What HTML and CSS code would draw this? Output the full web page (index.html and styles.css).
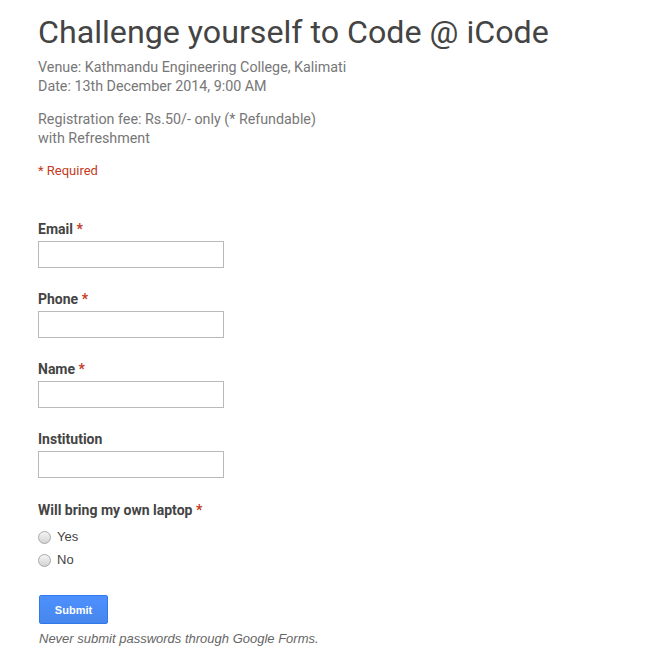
FILE: index.html
```html
<!DOCTYPE html>
<html>
<head>
<meta charset="utf-8">
<link rel="stylesheet" href="styles.css">
</head>
<body>
<div class="form">
  <h1 class="title">Challenge yourself to Code @ iCode</h1>
  <div class="desc">
    <p>Venue: Kathmandu Engineering College, Kalimati<br>Date: 13th December 2014, 9:00 AM</p>
    <p>Registration fee: Rs.50/- only (* Refundable)<br>with Refreshment</p>
  </div>
  <div class="req-note">* Required</div>
  <div class="items">
    <div class="item">
      <label class="label">Email <span class="star">*</span></label>
      <input class="text" type="text">
    </div>
    <div class="item">
      <label class="label">Phone <span class="star">*</span></label>
      <input class="text" type="text">
    </div>
    <div class="item">
      <label class="label">Name <span class="star">*</span></label>
      <input class="text" type="text">
    </div>
    <div class="item">
      <label class="label">Institution</label>
      <input class="text" type="text">
    </div>
    <div class="item item-choice">
      <label class="label">Will bring my own laptop <span class="star">*</span></label>
      <div class="choices">
        <label class="choice"><span class="radio"></span>Yes</label>
        <label class="choice"><span class="radio"></span>No</label>
      </div>
    </div>
  </div>
  <button class="submit">Submit</button>
  <div class="footnote">Never submit passwords through Google Forms.</div>
</div>
</body>
</html>
```
FILE: styles.css
```css
html, body { margin: 0; padding: 0; background: #fff; }
body { font-family: Roboto, "Liberation Sans", sans-serif; }
.form { padding: 12px 0 0 38px; }
.title {
  margin: 0;
  font-size: 32.2px;
  font-weight: 400;
  color: #444;
  line-height: 40px;
}
.desc { margin-top: 6px; color: #777; font-size: 14.3px; line-height: 19px; }
.desc p { margin: 0 0 14px 0; }
.req-note { color: #c43b1d; font-size: 13px; line-height: 18px; margin-top: 11px; }
.items { margin-top: 40px; display: flex; flex-direction: column; gap: 22px; }
.item { display: flex; flex-direction: column; align-items: flex-start; }
.item-choice { margin-top: 1px; }
.label { font-weight: 700; font-size: 14px; color: #444; line-height: 18px; margin-bottom: 3px; }
.star { color: #c43b1d; }
.text {
  width: 186px; height: 27px; box-sizing: border-box;
  border: 1px solid #b9b9b9; margin: 0; padding: 0; background: #fff;
}
.choices { display: flex; flex-direction: column; gap: 5px; margin-top: 6px; }
.choice {
  display: flex; align-items: center;
  font-family: "Liberation Sans", Arial, sans-serif;
  font-size: 13px; color: #444; line-height: 18px;
}
.radio {
  width: 11px; height: 11px; border-radius: 50%;
  border: 1px solid #a8a8a8;
  background: linear-gradient(#f4f4f4, #d4d4d4);
  margin-right: 6px;
}
.submit {
  display: block;
  margin: 26px 0 0 1px;
  width: 69px; height: 29px;
  background: #4d90fe; background: linear-gradient(#4d90fe, #4787ed);
  border: 1px solid #3079ed; border-radius: 2px;
  color: #fff; font-family: "Liberation Sans", Arial, sans-serif;
  font-size: 11px; font-weight: 700; padding: 0;
}
.footnote {
  margin-top: 7px; margin-left: 1px;
  font-family: "Liberation Sans", Arial, sans-serif;
  font-style: italic; font-size: 13px; color: #666;
  line-height: 16px;
}
```
